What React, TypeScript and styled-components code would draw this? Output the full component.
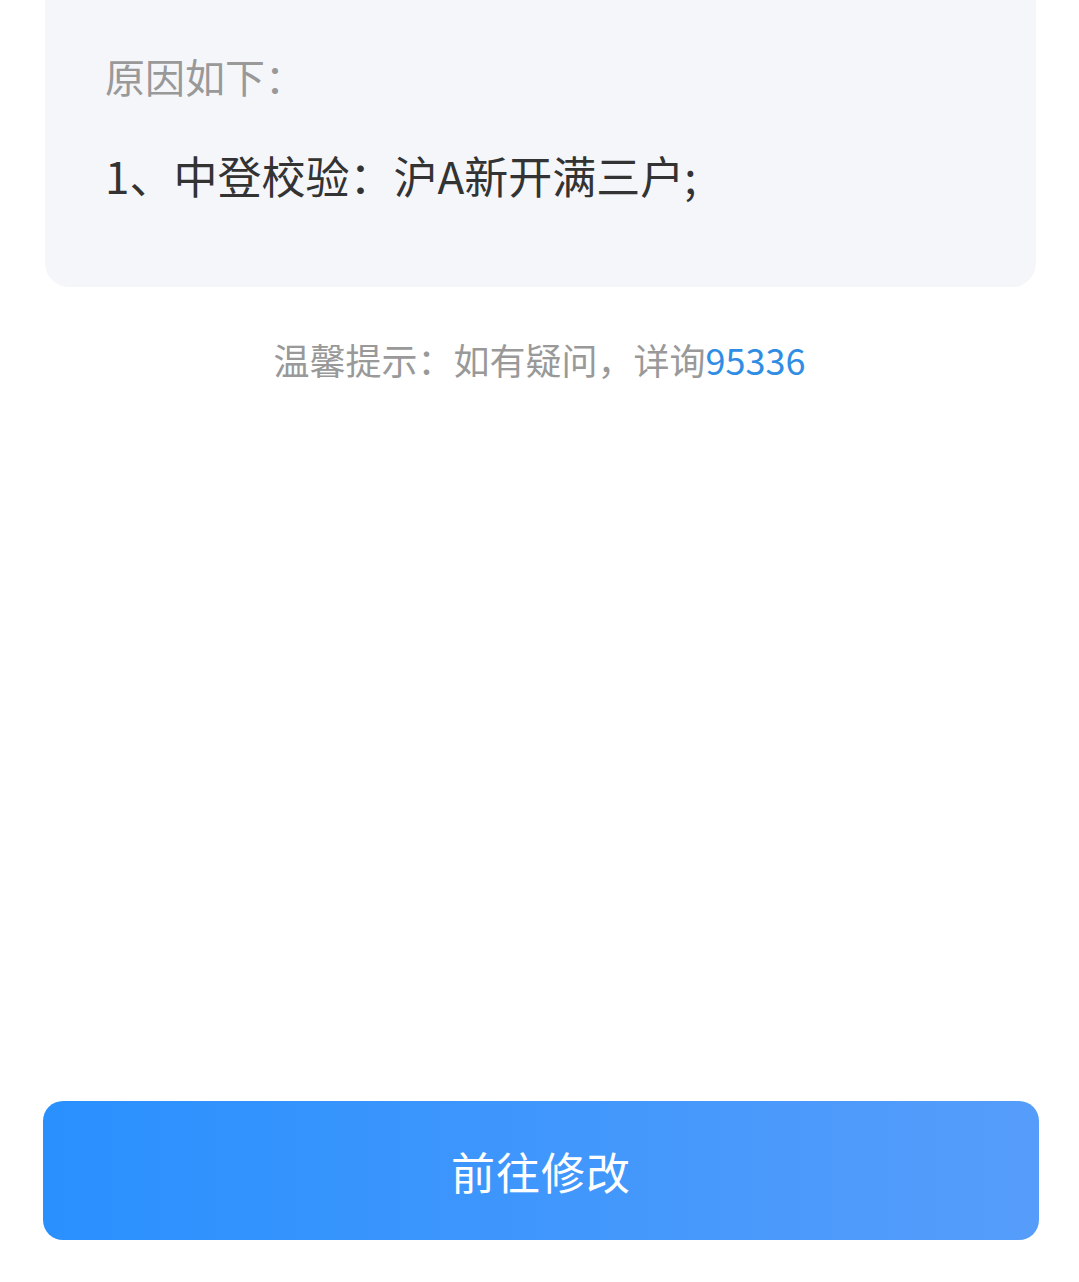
import React from 'react';
import styled, { createGlobalStyle } from 'styled-components';

const GlobalStyle = createGlobalStyle`
  html, body {
    margin: 0;
    padding: 0;
    background: #ffffff;
  }
  body {
    font-family: "Noto Sans CJK SC", "Noto Sans", sans-serif;
  }
`;

const Page = styled.div`
  min-height: 1282px;
  display: flex;
  flex-direction: column;
  box-sizing: border-box;
`;

const ReasonCard = styled.div`
  margin: 0 43px 0 45px;
  padding: 48px 60px 81px;
  background: #f5f6fa;
  border-radius: 0 0 24px 24px;
`;

const ReasonTitle = styled.div`
  font-size: 40px;
  line-height: 56px;
  color: #999999;
`;

const ReasonItem = styled.div`
  margin-top: 40px;
  font-size: 44px;
  line-height: 62px;
  color: #333333;
`;

const Tip = styled.div`
  margin-top: 47px;
  text-align: center;
  font-size: 36px;
  line-height: 50px;
  color: #999999;
`;

const Phone = styled.span`
  color: #2f8de4;
`;

const SubmitButton = styled.button`
  margin: auto 40px 42px 43px;
  height: 139px;
  border: none;
  border-radius: 20px;
  background: linear-gradient(90deg, #2990fe 0%, #569dfa 100%);
  color: #ffffff;
  font-family: inherit;
  font-size: 44px;
  letter-spacing: 1px;
  cursor: pointer;
`;

const App = () => (
  <>
    <GlobalStyle />
    <Page>
      <ReasonCard>
        <ReasonTitle>原因如下：</ReasonTitle>
        <ReasonItem>1、中登校验：沪A新开满三户;</ReasonItem>
      </ReasonCard>
      <Tip>
        温馨提示：如有疑问，详询<Phone>95336</Phone>
      </Tip>
      <SubmitButton type="button">前往修改</SubmitButton>
    </Page>
  </>
);

export default App;
